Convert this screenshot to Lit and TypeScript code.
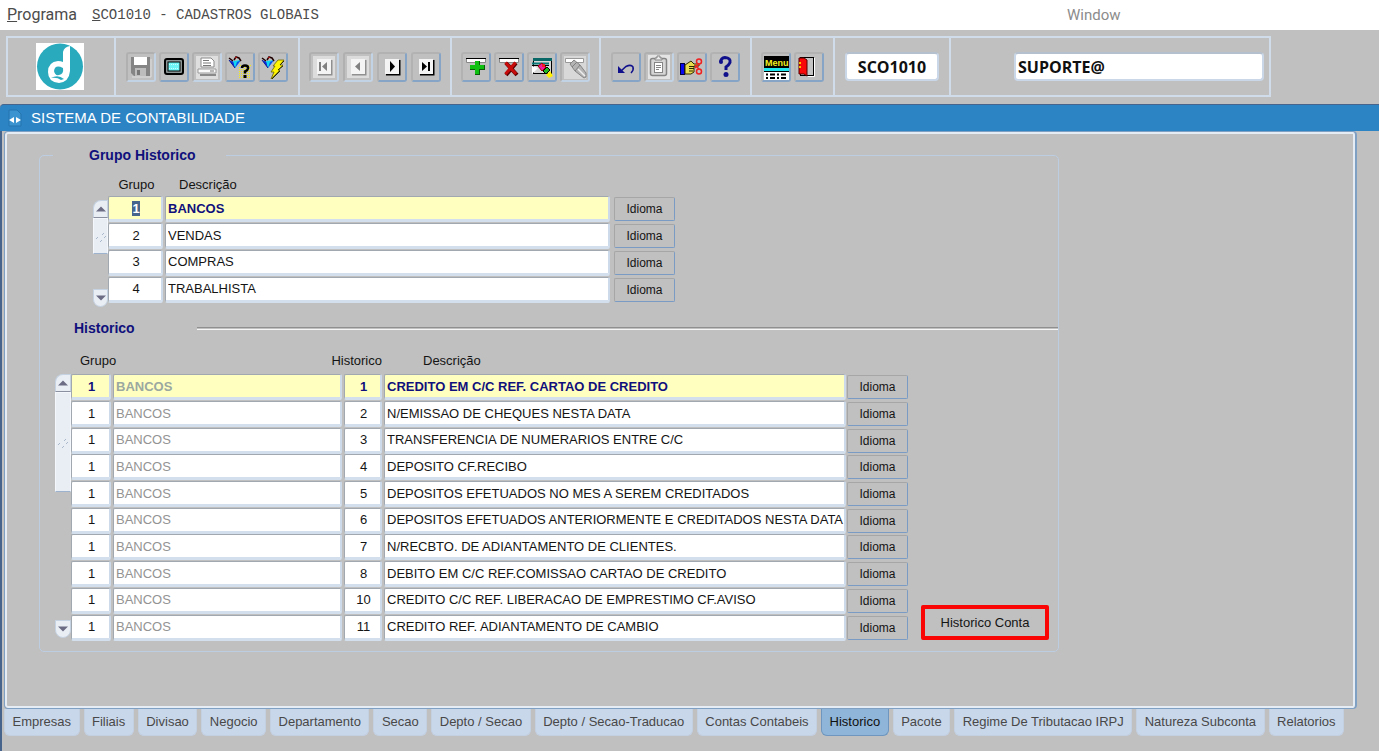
import { LitElement, html, css, svg } from "lit";
import { customElement, state } from "lit/decorators.js";
import { classMap } from "lit/directives/class-map.js";

type Tool = { id: string; label: string; disabled?: boolean };

const icon = (body: unknown) =>
  svg`<svg viewBox="0 0 26 26" width="26" height="26" aria-hidden="true">${body}</svg>`;

const navIcon = (glyph: unknown, off: boolean) =>
  icon(svg`
    ${off ? svg`<rect x="2" y="2" width="22" height="22" fill="#dcdcdc"/>` : ""}
    <path d="M7 20.5H20.5V6" fill="none" stroke=${off ? "#909090" : "#000"} stroke-width="2"/>
    <rect x="6" y="5" width="14" height="15" fill="#f4f4f4"/>
    <g fill=${off ? "#808080" : "#000"}>${glyph}</g>`);

const funnel = svg`
  <path d="M2 6L7 8L8 14Z" fill="#0a2be0"/>
  <path d="M6 7L14 6L8 14Z" fill="#10d8f0"/>
  <path d="M10 8L14 6L8 14Z" fill="#0a50f0"/>
  <path d="M2 6L8 14" fill="none" stroke="#0a1a90"/>
  <path d="M2 4L6 7M7 6L9 3L12 4L14 7" stroke="#200000" stroke-width="1.5" fill="none"/>
  <path d="M8 4L10 3" stroke="#d01010"/>`;

const ICONS: Record<string, unknown> = {
  save: icon(svg`
    <path d="M3 3H22V22H6L3 19Z" fill="#858585"/>
    <rect x="6" y="3" width="13" height="8" fill="#fff"/>
    <rect x="7" y="14" width="11" height="8" fill="#bdbdbd"/>
    <rect x="9" y="16" width="3" height="5" fill="#777"/>
    <path d="M4 23H23V5" fill="none" stroke="#dedede"/>`),
  screen: icon(svg`
    <rect x="4" y="5" width="18" height="15" rx="2" fill="#8d9696" stroke="#000" stroke-width="2"/>
    <rect x="7" y="8" width="12" height="9" fill="#6ff5f5" stroke="#000"/>
    <path d="M8 10.5H18M8 14.5H18" stroke="#c8ffff" stroke-dasharray="1 1"/>`),
  print: icon(svg`
    <rect x="2" y="2" width="22" height="23" fill="#dedede"/>
    <path d="M7 4H17L20 7V13H7Z" fill="#fff" stroke="#8a8a8a"/>
    <path d="M9 6.5H15M9 9H17M9 11.5H17" stroke="#777"/>
    <path d="M4 15H22V19H4Z" fill="#fafafa" stroke="#999"/>
    <path d="M6 21H22" stroke="#8a8a8a" stroke-width="2"/>
    <path d="M16 17H20" stroke="#777"/>`),
  query: icon(svg`
    ${funnel}
    <g stroke="#f5ee10" stroke-dasharray="1 1"><path d="M13 11.5H24M12 13.5H24M12 15.5H24M12 17.5H24M12 19.5H24M12 21.5H24M12 23.5H24"/></g>
    <path d="M15 14Q15 11.5 18 11.5Q21.5 11.5 21 14.5Q20.5 16.500 18 17.500V19.500" fill="none" stroke="#000" stroke-width="2.5"/>
    <rect x="16.500" y="21" width="3" height="3" fill="#000"/>`),
  execute: icon(svg`
    ${funnel}
    <path d="M18 6H24L20 11H23L18 16H20L11 25L14 18H11L15 12H13Z" fill="#fff500" stroke="#6b6400" stroke-width=".8"/>
    <path d="M24 7L20 11M23 12L18 16M20 17L12 25" stroke="#303000" stroke-width="1"/>`),
  first: navIcon(svg`<rect x="8" y="8" width="2" height="9"/><path d="M16 8V17L11 12.500Z"/>`, true),
  prev: navIcon(svg`<path d="M15 8V17L10 12.500Z"/>`, true),
  next: navIcon(svg`<path d="M11 7V18L16 12.500Z"/>`, false),
  last: navIcon(svg`<path d="M9 8V17L14 12.500Z"/><rect x="15" y="8" width="2" height="9"/>`, false),
  insert: icon(svg`
    <path d="M3.500 8.500V4.500H22.500V8.500Z" fill="#fff" stroke="#888"/><path d="M3 4.500H23" stroke="#000"/>
    <path d="M12 7H17V11H22V16H17V21H12V16H7V11H12Z" fill="#0a5a0a"/>
    <path d="M12 7H16V11H21V15H16V20H12V15H7V11H12Z" fill="#10c010"/>`),
  remove: icon(svg`
    <path d="M3.500 8.500V4.500H22.500V8.500Z" fill="#fff" stroke="#888"/><path d="M3 4.500H23" stroke="#000"/>
    <path d="M10 9L21 21M20 9L10 21" stroke="#5a0000" stroke-width="4"/>
    <path d="M9.500 8.500L20 20M19.500 8.500L9.500 20" stroke="#c80c0c" stroke-width="3"/>`),
  lookup: icon(svg`
    <rect x="4.500" y="4.500" width="18" height="15" fill="#d8d8d8" stroke="#000"/>
    <rect x="4" y="4" width="19" height="3" fill="#086868"/>
    <path d="M3 9.500H20" stroke="#087878" stroke-width="2"/>
    <path d="M3 12V20L9 14Z" fill="#fff"/>
    <path d="M3 11.500H20" fill="none" stroke="#000"/>
    <path d="M9 12L13 9L17 13L13 17Z" fill="#f018a0" stroke="#a00000"/>
    <rect x="13" y="10" width="3" height="3" fill="#f02020"/>
    <path d="M14 17L18 13L21 16L17 20Z" fill="#20b820" stroke="#000"/>
    <path d="M17 21L21 17L24 22L20 24Z" fill="#fff000"/>`),
  clear: icon(svg`
    <rect x="2" y="2" width="22" height="23" fill="#d8d8d8"/>
    <path d="M3.500 8.500V4.500H21.500V8.500Z" fill="#fff" stroke="#999"/>
    <path d="M8 10L12 6L18 11L24 19V23L22 24L13 17Z" fill="#b4b4b4" stroke="#858585"/>
    <path d="M13 17L18 11M10 13L15 8" stroke="#808080"/>
    <path d="M16 15L23 22" stroke="#eee" stroke-width="1.500"/>`),
  undo: icon(svg`
    <path d="M8 17L13 12.500Q18 10 20 13Q21 16 18 19" fill="none" stroke="#10108c" stroke-width="1.500"/>
    <path d="M5 12V19H12Z" fill="#10108c"/>`),
  clipboard: icon(svg`
    <rect x="2" y="1" width="22" height="24" fill="#e4e4e4"/>
    <rect x="4.500" y="4.500" width="16" height="17" rx="2" fill="#d6d6d6" stroke="#858585" stroke-width="1.500"/>
    <path d="M9 6V4H11V2H14V4H16V6Z" fill="#eee" stroke="#858585"/>
    <rect x="8.500" y="8.500" width="8" height="10" fill="#fff" stroke="#858585"/>
    <path d="M10 11.500H15M10 13.500H15M10 15.500H13" stroke="#858585"/>`),
  cut: icon(svg`
    <rect x="1.500" y="9.500" width="4" height="11" fill="#0808f0" stroke="#000040"/>
    <path d="M6 11L12 7L15 10H20V12H15V18L12 20H6Z" fill="#e8dc50" stroke="#302800"/>
    <path d="M10 12.500H15M10 14.500H15M10 17H14" stroke="#302800"/>
    <circle cx="20" cy="7.500" r="2.500" fill="none" stroke="#f02020" stroke-width="1.500"/>
    <circle cx="20" cy="17.500" r="2.500" fill="none" stroke="#f02020" stroke-width="1.500"/>
    <path d="M20 10L16 14M20 15L16 11" stroke="#f02020" stroke-width="1.500"/>`),
  help: icon(svg`
    <path d="M8.500 8Q9 4 13 3.500Q19 4 18 8.500Q17 11 14 13V16" fill="none" stroke="#10108c" stroke-width="3"/>
    <circle cx="9" cy="8" r="2" fill="#10108c"/><circle cx="14" cy="20.500" r="2.500" fill="#10108c"/>`),
  menu: icon(svg`
    <rect x="1" y="2" width="25" height="12" fill="#000"/>
    <text class="menu-word" x="2" y="12">Menu</text>
    <rect x="1" y="14" width="25" height="3" fill="#20e8f0"/>
    <path d="M1 17.500H26" stroke="#000"/><rect x="1" y="18" width="25" height="8" fill="#fff"/>
    <path d="M3 20.500H5M7 20.500H12M14 20.500H16M18 20.500H23M3 24H5M7 24H12M14 24H16M18 24H23" stroke="#000" stroke-width="2"/>`),
  exit: icon(svg`
    <rect x="4.500" y="3.500" width="13" height="18" fill="#c4c4c4" stroke="#000"/>
    <path d="M18.500 4V22.500H12" fill="none" stroke="#fff"/>
    <path d="M3 4H8L11 6V22L8 20H3Z" fill="#f80808" stroke="#500"/>
    <path d="M3 9H5M3 13H5" stroke="#ff0" stroke-width="1.500"/>`),
};

const TOOLS: { roomy?: boolean; spaced?: boolean; items: Tool[] }[] = [
  {
    roomy: true,
    items: [
      { id: "save", label: "Salvar", disabled: true },
      { id: "screen", label: "Tela" },
      { id: "print", label: "Imprimir", disabled: true },
      { id: "query", label: "Entrar consulta" },
      { id: "execute", label: "Executar consulta" },
    ],
  },
  {
    spaced: true,
    items: [
      { id: "first", label: "Primeiro", disabled: true },
      { id: "prev", label: "Anterior", disabled: true },
      { id: "next", label: "Proximo" },
      { id: "last", label: "Ultimo" },
    ],
  },
  {
    items: [
      { id: "insert", label: "Inserir" },
      { id: "remove", label: "Remover" },
      { id: "lookup", label: "Lista" },
      { id: "clear", label: "Limpar", disabled: true },
    ],
  },
  {
    roomy: true,
    items: [
      { id: "undo", label: "Desfazer" },
      { id: "clipboard", label: "Colar", disabled: true },
      { id: "cut", label: "Recortar" },
      { id: "help", label: "Ajuda" },
    ],
  },
  {
    items: [
      { id: "menu", label: "Menu" },
      { id: "exit", label: "Sair" },
    ],
  },
];

const GROUPS: [string, string][] = [
  ["1", "BANCOS"],
  ["2", "VENDAS"],
  ["3", "COMPRAS"],
  ["4", "TRABALHISTA"],
];

const ENTRIES: [string, string][] = [
  ["1", "CREDITO EM C/C REF. CARTAO DE CREDITO"],
  ["2", "N/EMISSAO DE CHEQUES NESTA DATA"],
  ["3", "TRANSFERENCIA DE NUMERARIOS ENTRE C/C"],
  ["4", "DEPOSITO CF.RECIBO"],
  ["5", "DEPOSITOS EFETUADOS NO MES A SEREM CREDITADOS"],
  ["6", "DEPOSITOS EFETUADOS ANTERIORMENTE E CREDITADOS NESTA DATA"],
  ["7", "N/RECBTO. DE ADIANTAMENTO DE CLIENTES."],
  ["8", "DEBITO EM C/C REF.COMISSAO CARTAO DE CREDITO"],
  ["10", "CREDITO C/C REF. LIBERACAO DE EMPRESTIMO CF.AVISO"],
  ["11", "CREDITO REF. ADIANTAMENTO DE CAMBIO"],
];

const TABS = [
  "Empresas", "Filiais", "Divisao", "Negocio", "Departamento", "Secao",
  "Depto / Secao", "Depto / Secao-Traducao", "Contas Contabeis", "Historico",
  "Pacote", "Regime De Tributacao IRPJ", "Natureza Subconta", "Relatorios",
];

@customElement("form-scrollbar")
export class FormScrollbar extends LitElement {
  static styles = css`
    :host { display: flex; flex-direction: column; }
    button {
      height: 18px; padding: 0; flex: none;
      display: flex; align-items: center; justify-content: center;
      background: #e9eef5; border: 1px solid #c5d2e2;
    }
    .up { border-radius: 8px 0 0 0; border-bottom: 1px solid #8a90a0; }
    .down { border-radius: 0 0 8px 8px; }
    .track { flex: 1; display: flex; flex-direction: column; }
    .thumb {
      height: 50%; box-sizing: border-box; background: #e9eef5;
      border: 1px solid #f4f7fb; border-bottom: 1px solid #9db3cd;
      display: flex; align-items: center; justify-content: center;
    }
    .thumb.tall { height: 44%; }
  `;
  static properties = { tall: { type: Boolean } };
  declare tall: boolean;
  render() {
    return html`
      <button class="up" aria-label="Subir"><svg width="10" height="6"><path d="M0 5.500L5 .5L10 5.500Z" fill="#6c6c84"/></svg></button>
      <div class="track">
        <div class=${classMap({ thumb: true, tall: this.tall })}>
          <svg width="12" height="14"><path d="M1 10L3 8M7 6L9 4M5 13L7 11M9 9L11 7" stroke="#a9b9cb"/></svg>
        </div>
      </div>
      <button class="down" aria-label="Descer"><svg width="10" height="6"><path d="M0 .5L5 5.500L10 .5Z" fill="#6c6c84"/></svg></button>
    `;
  }
}

@customElement("app-root")
export class AppRoot extends LitElement {
  @state() private tab = "Historico";

  static styles = css`
    :host {
      display: flex; flex-direction: column; min-height: 100vh; box-sizing: border-box;
      background: #c0c0c0; color: #141414;
      font-family: "Liberation Sans", Arial, sans-serif; font-size: 13px; line-height: 16px;
    }
    button, input { font: inherit; color: inherit; margin: 0; box-sizing: border-box; }
    button:focus, input:focus { outline: none; }

    .menubar {
      display: grid; grid-template-columns: 1067px auto; align-items: center;
      height: 30px; background: #fff; color: #4c4c4c;
      font-family: Roboto, "Liberation Sans", sans-serif; font-size: 16px; line-height: 20px;
    }
    .menus { display: flex; align-items: center; gap: 15px; padding-left: 7px; }
    .menubar button { background: none; border: 0; padding: 0; }
    .menubar .mono { font-family: "Liberation Mono", monospace; font-size: 14px; }
    .menubar .off { color: #8c8c8c; justify-self: start; font-size: 15px; }

    .toolbar {
      display: flex; align-self: flex-start; margin: 6px 0 7px 6px; height: 61px;
      box-sizing: border-box; border: 2px solid #d0dcea;
    }
    .cell { display: flex; align-items: center; border-left: 2px solid #d0dcea; padding: 0 9px; gap: 3px; }
    .cell.roomy { padding: 0 10px; }
    .cell.spaced { gap: 4px; }
    .cell.logo { border-left: 0; padding: 0 30px 0 28px; }
    .tool {
      width: 30px; height: 30px; padding: 0; display: flex; align-items: center; justify-content: center;
      background: #c0c0c0; border: 2px solid; border-color: #b2b2b2 #86a4c6 #86a4c6 #b2b2b2; border-radius: 3px;
    }
    .tool:disabled { border-color: #b0b0b0 #c3d3e6 #c3d3e6 #b0b0b0; }
    .tool svg { flex: none; }
    .menu-word { font-family: "Liberation Sans", sans-serif; font-weight: bold; font-size: 9px; fill: #f4f020; }
    .status {
      height: 29px; background: #fff; border: 2px solid #c9d7e8; border-top-color: #b4c0ce; border-radius: 4px;
      font-family: "Open Sans", "Noto Sans", sans-serif; font-weight: bold; font-size: 16px; color: #101010; padding: 0 2px;
    }
    .status.code { width: 94px; text-align: center; }
    .status.user { width: 250px; }
    .cell.code-cell { padding: 0 10px; }
    .cell.user-cell { padding: 0 5px 0 63px; }

    .titlebar {
      display: flex; align-items: center; gap: 9px; height: 27px; box-sizing: border-box;
      padding-left: 8px; background: #2c84c4; border-top: 1px solid #46648c; border-radius: 4px 0 0 0;
      color: #fff; font-size: 15px; font-weight: normal; margin: 0;
    }
    .body {
      flex: 1; display: flex; flex-direction: column; border-left: 2px solid #46648c; padding: 0 22px 15px 2px;
    }
    .panel {
      flex: 1; border: 1px solid #7f9fc3; border-right-width: 2px; border-radius: 4px;
      box-shadow: inset 0 0 0 2px #e6ecf4; padding: 15px 32px 12px 34px;
    }
    .group { margin: 0; width: fit-content; border: 1px solid #bccde2; border-radius: 5px; padding: 0 0 10px; }
    legend { margin-left: 13px; padding: 0 30px 0 36px; font-weight: bold; font-size: 14px; color: #10107c; }
    .block { display: flex; align-items: flex-start; }
    .block.upper { padding: 11px 0 0 53px; }
    .block.lower { padding: 10px 9px 0 15px; }
    .block form-scrollbar { width: 15px; }
    .block.upper form-scrollbar { margin-top: 26px; height: 107px; }
    .block.lower form-scrollbar { width: 16px; margin-top: 26px; height: 264px; }
    .section { display: flex; align-items: center; margin-top: 11px; padding-left: 34px; line-height: 20px; }
    .section h2 { margin: 0; width: 123px; font-size: 14px; font-weight: bold; color: #10107c; }
    .section span { flex: 1; height: 1px; border-top: 1px solid #8f8f8f; border-bottom: 1px solid #f6f6f6; }

    table { border-collapse: collapse; table-layout: fixed; }
    .upper table { width: 567px; height: 129px; }
    .lower table { width: 837px; height: 293px; }
    th { font-weight: normal; text-align: left; padding: 0; height: 22px; white-space: nowrap; }
    .lower th { height: 26px; }
    td { padding: 0 2px 0 0; }
    .upper td.action { padding: 0 0 0 2px; }
    .lower td.action { padding: 0; }
    .lower td.wide { padding: 0 1px 0 0; }
    .field {
      display: block; width: 100%; height: 26px; padding: 0 0 0 2px;
      background: #fff; border: 1px solid #a2a8b0; border-right: 2px solid #cddaea; border-bottom: 3px solid #d3dfed;
      border-radius: 2px;
    }
    .num { text-align: center; }
    .dim { color: #939393; }
    .current .field { background: #ffffc0; color: #10107c; font-weight: bold; }
    .current .dim { color: #9aa8a0; }
    .field::selection { background: #46648c; color: #fff; }
    .small {
      display: block; width: 100%; height: 24px; padding: 0; background: #c0c0c0; font-size: 12px;
      border: 1px solid; border-color: #a6a6a6 #7a9cc4 #7a9cc4 #a6a6a6; border-radius: 2px;
    }
    .account {
      align-self: flex-end; margin: 0 0 1px 13px; width: 128px; height: 35px; padding: 0;
      background: #c0c0c0; border: 4px solid #fb0404; border-radius: 2px;
    }
    .c-gap { text-indent: 14px; }
    .c-code { text-align: center; }
    .c-left { text-indent: 9px; }
    .c-right { direction: rtl; padding-right: 2px; }
    .c-desc { text-indent: 39px; }

    .tabs { display: flex; gap: 4px; padding-right: 13px; }
    .tabs button {
      flex: 1 1 auto; height: 27px; padding: 0 7px; white-space: nowrap; color: #484848;
      background: #c9d7ea; border: 1px solid #c3d0e2; border-top: 0; border-radius: 0 0 6px 6px;
    }
    .tabs .active { background: #8fb5d8; border-color: #6f96bf; color: #101010; }
  `;

  firstUpdated() {
    const first = this.renderRoot.querySelector<HTMLInputElement>(".upper .field");
    first?.focus();
    first?.select();
  }

  render() {
    return html`
      <nav class="menubar">
        <div class="menus">
          <button><u>P</u>rograma</button>
          <button class="mono"><u>S</u>CO1010 - CADASTROS GLOBAIS</button>
        </div>
        <button class="off">Window</button>
      </nav>

      <header class="toolbar">
        <div class="cell logo">
          <svg width="48" height="47" viewBox="0 0 48 47" role="img" aria-label="Logo">
            <rect width="48" height="47" fill="#fff"/>
            <circle cx="24" cy="23.500" r="23" fill="#2aabbd"/>
            <path d="M27 19V9Q28 4 34 3V28Q33 39 23 40Q12 39 12 29Q12 19 22 18Q25 18 27 19Z" fill="#fff"/>
            <path d="M27 25Q19 21 18 28Q19 33 23 32Q28 31 27 25Z" fill="#2aabbd"/>
            <path d="M15 35Q22 31 28 36L25 37Q21 34 15 35Z" fill="#2aabbd"/>
          </svg>
        </div>
        ${TOOLS.map((group) => html`
          <div class=${classMap({ cell: true, roomy: !!group.roomy, spaced: !!group.spaced })}>
            ${group.items.map((t) => html`
              <button class="tool" aria-label=${t.label} ?disabled=${t.disabled}>${ICONS[t.id]}</button>`)}
          </div>`)}
        <div class="cell code-cell"><input class="status code" aria-label="Programa" .value=${"SCO1010"} /></div>
        <div class="cell user-cell"><input class="status user" aria-label="Usuario" .value=${"SUPORTE@"} /></div>
      </header>

      <h1 class="titlebar">
        <svg width="14" height="18" viewBox="0 0 14 18" aria-hidden="true">
          <path d="M1 1H9L13 5V17H1Z" fill="#3b93d0" stroke="#2474b0"/>
          <path d="M6 8V14L1 11ZM8 8L13 11L8 14Z" fill="#fff"/>
        </svg>
        SISTEMA DE CONTABILIDADE
      </h1>

      <main class="body">
        <div class="panel">
          <fieldset class="group">
            <legend>Grupo Historico</legend>
            <div class="block upper">
              <form-scrollbar></form-scrollbar>
              <table>
                <colgroup><col width="57" /><col width="447" /><col width="63" /></colgroup>
                <thead><tr><th class="c-code">Grupo</th><th class="c-gap">Descrição</th><th></th></tr></thead>
                <tbody>
                  ${GROUPS.map(([code, name], i) => html`
                    <tr class=${classMap({ current: i === 0 })}>
                      <td><input class="field num" aria-label="Grupo" .value=${code} /></td>
                      <td><input class="field" aria-label="Descrição" .value=${name} /></td>
                      <td class="action"><button class="small">Idioma</button></td>
                    </tr>`)}
                </tbody>
              </table>
            </div>

            <div class="section"><h2>Historico</h2><span></span></div>

            <div class="block lower">
              <form-scrollbar .tall=${true}></form-scrollbar>
              <table>
                <colgroup><col width="42" /><col width="231" /><col width="40" /><col width="463" /><col width="61" /></colgroup>
                <thead>
                  <tr>
                    <th class="c-left">Grupo</th><th></th><th class="c-right">Historico</th>
                    <th class="c-desc">Descrição</th><th></th>
                  </tr>
                </thead>
                <tbody>
                  ${ENTRIES.map(([code, text], i) => html`
                    <tr class=${classMap({ current: i === 0 })}>
                      <td><input class="field num" aria-label="Grupo" .value=${"1"} /></td>
                      <td><input class="field dim" aria-label="Nome do grupo" .value=${"BANCOS"} readonly /></td>
                      <td><input class="field num" aria-label="Historico" .value=${code} /></td>
                      <td class="wide"><input class="field" aria-label="Descrição" .value=${text} /></td>
                      <td class="action"><button class="small">Idioma</button></td>
                    </tr>`)}
                </tbody>
              </table>
              <button class="account">Historico Conta</button>
            </div>
          </fieldset>
        </div>
        <nav class="tabs">
          ${TABS.map((t) => html`
            <button class=${classMap({ active: t === this.tab })} @click=${() => (this.tab = t)}>${t}</button>`)}
        </nav>
      </main>
    `;
  }
}
